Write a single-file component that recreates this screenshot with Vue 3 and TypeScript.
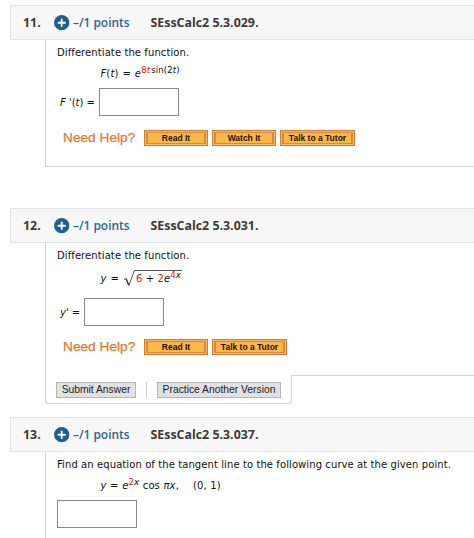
<script setup lang="ts">
interface Question {
  number: number
  code: string
  prompt: string
  help: string[]
}

const questions: Question[] = [
  { number: 11, code: 'SEssCalc2 5.3.029.', prompt: 'Differentiate the function.', help: ['Read It', 'Watch It', 'Talk to a Tutor'] },
  { number: 12, code: 'SEssCalc2 5.3.031.', prompt: 'Differentiate the function.', help: ['Read It', 'Talk to a Tutor'] },
  { number: 13, code: 'SEssCalc2 5.3.037.', prompt: 'Find an equation of the tangent line to the following curve at the given point.', help: [] },
]
</script>

<template>
  <main class="page">
    <section v-for="q in questions" :key="q.number" class="question" :class="'q' + q.number">
      <header class="head">
        <span class="num">{{ q.number }}.</span>
        <svg class="plus" viewBox="0 0 16 16" width="16" height="16">
          <circle cx="7.7" cy="7.7" r="7.6" fill="#1d5f93" />
          <path d="M7.7 4.4v6.6M4.4 7.7h6.6" stroke="#fff" stroke-width="1.9" stroke-linecap="round" />
        </svg>
        <span class="points">–/1 points</span>
        <span class="code">{{ q.code }}</span>
      </header>

      <div class="body">
        <p class="prompt">{{ q.prompt }}</p>

        <div v-if="q.number === 11" class="formula">
          <i>F</i>(<i>t</i>) = <i>e</i><span class="sup"><b>8</b><i class="red">t</i><span class="fn">sin(2<i>t</i>)</span></span>
        </div>
        <div v-else-if="q.number === 12" class="formula">
          <i>y</i> =
          <span class="root">
            <svg class="radical" width="60" height="18" viewBox="0 0 60 18">
              <path d="M1 10.5L3 9.5" fill="none" stroke="#444" stroke-width="0.8" />
              <path d="M3 9.5L5.8 16.2" fill="none" stroke="#333" stroke-width="1.4" />
              <path d="M5.8 16.5L11.5 1.5H59" fill="none" stroke="#444" stroke-width="0.9" />
            </svg>
            <span class="radicand"><b>6</b> + <b>2</b><i>e</i><span class="sup"><b>4</b><i>x</i></span></span>
          </span>
        </div>
        <div v-else class="formula">
          <i>y</i> = <i>e</i><span class="sup"><b>2</b><i>x</i></span> cos <i>πx</i>,<span class="point">(0, 1)</span>
        </div>

        <div class="answer">
          <label v-if="q.number === 11" class="label"><i>F</i> '(<i>t</i>) =</label>
          <label v-else-if="q.number === 12" class="label"><i>y</i>' =</label>
          <input class="field" type="text" />
        </div>

        <div v-if="q.help.length" class="help">
          <span class="need">Need Help?</span>
          <button v-for="h in q.help" :key="h" class="hbtn" :class="{ wide: h.length > 10 }"><span>{{ h }}</span></button>
        </div>
      </div>

      <footer v-if="q.number === 12" class="foot">
        <div class="tab">
          <button class="act submit">Submit Answer</button>
          <span class="sep"></span>
          <button class="act practice">Practice Another Version</button>
        </div>
        <div class="rule"></div>
      </footer>
    </section>
  </main>
</template>

<style>
body {
  background: #fff;
  overflow: hidden;
}
</style>

<style scoped>
* {
  box-sizing: border-box;
}
.page {
  width: 474px;
  height: 538px;
  padding: 5px 0 0 10px;
  overflow: hidden;
  font-family: "DejaVu Sans", Verdana, sans-serif;
  font-size: 10px;
  color: #111;
}
.q11 {
  height: 203px;
}
.q12 {
  height: 209px;
}
.head {
  display: flex;
  align-items: center;
  height: 35px;
  border: 1px solid #e2e2e2;
  border-right: 0;
  background: #f7f7f7;
  font: 700 12.4px/34px "Open Sans", sans-serif;
  color: #3a3a3a;
  white-space: nowrap;
}
.num {
  width: 43px;
  padding-left: 12px;
}
.plus {
  flex: none;
  margin-right: 3px;
}
.points {
  width: 77.5px;
  font-size: 11.9px;
  font-weight: 600;
  line-height: 33px;
  padding-bottom: 1px;
  color: #2a6697;
}
.body {
  margin-left: 35px;
  padding-left: 11px;
  border-left: 1px solid #d4d4d4;
}
.q11 .body {
  height: 127px;
  border-bottom: 1px solid #d4d4d4;
}
.q12 .body {
  height: 132px;
}
.q13 .body {
  height: 100px;
}
.prompt {
  margin: 0;
  padding-top: 5px;
  height: 24px;
  line-height: 15px;
  letter-spacing: 0.09px;
  white-space: nowrap;
}
.formula {
  height: 24px;
  padding-left: 43.5px;
  line-height: 19px;
  letter-spacing: 0.1px;
  word-spacing: 0.7px;
  white-space: nowrap;
}
.q13 .formula {
  word-spacing: 0.3px;
}
.formula b,
.red {
  font-weight: 400;
  color: #e8131d;
}
.sup {
  position: relative;
  top: -4px;
  font-size: 8.6px;
  line-height: 1;
}
.fn {
  padding-left: 1px;
}
.point {
  margin-left: 14px;
}
.root {
  position: relative;
  margin-left: 0;
}
.radical {
  position: absolute;
  left: 0;
  top: -4px;
}
.radicand {
  padding-left: 13px;
  word-spacing: 0;
}
.q12 .prompt {
  height: 26px;
}
.q12 .formula {
  height: 29px;
}
.answer {
  display: flex;
  align-items: flex-start;
  height: 28px;
}
.label {
  flex: none;
  width: 42px;
  padding-left: 3px;
  line-height: 29px;
  white-space: nowrap;
}
.q12 .label {
  width: 27px;
}
.field {
  width: 79.5px;
  height: 27.5px;
  margin: 0;
  padding: 2px 4px;
  border: 1px solid #878787;
  border-radius: 0;
  background: #fff;
  outline: 0;
}
.help {
  display: flex;
  gap: 4px;
  height: 17px;
  margin-top: 14px;
}
.q12 .help {
  margin-top: 13px;
}
.need {
  width: 83px;
  padding-left: 6px;
  font: 13.7px/16px "Liberation Sans", Arial, sans-serif;
  color: #e8772e;
  -webkit-text-stroke: 0.25px #e8772e;
  white-space: nowrap;
}
.hbtn {
  width: 64px;
  height: 16px;
  margin: 0;
  padding: 1px;
  border: 1px solid #cf7c37;
  background: #f8b865;
  font: 700 8.5px/11px "Liberation Sans", Arial, sans-serif;
  color: #1c1000;
  white-space: nowrap;
}
.hbtn span {
  display: block;
  height: 12px;
  border: 1px solid #d88a34;
  border-width: 1px 2px;
  background: #fbb849;
}
.hbtn.wide {
  width: 75px;
}
.foot {
  display: flex;
  margin-left: 35px;
}
.tab {
  display: flex;
  align-items: flex-start;
  width: 247px;
  height: 29px;
  padding: 7px 0 0 10px;
  border: 1px solid #d4d4d4;
  border-top: 0;
  border-radius: 0 0 4px 4px;
}
.rule {
  flex: 1;
  border-top: 1px solid #d4d4d4;
}
.act {
  height: 16px;
  margin: 0;
  padding: 0;
  border: 1px solid #b5b5b5;
  background: #e1e1e1;
  font: 10.3px/14px "Liberation Sans", Arial, sans-serif;
  color: #222;
  white-space: nowrap;
}
.submit {
  width: 80px;
}
.practice {
  width: 124px;
}
.sep {
  width: 1px;
  height: 16px;
  margin: 0 10px;
  background: #d0d0d0;
}
</style>
